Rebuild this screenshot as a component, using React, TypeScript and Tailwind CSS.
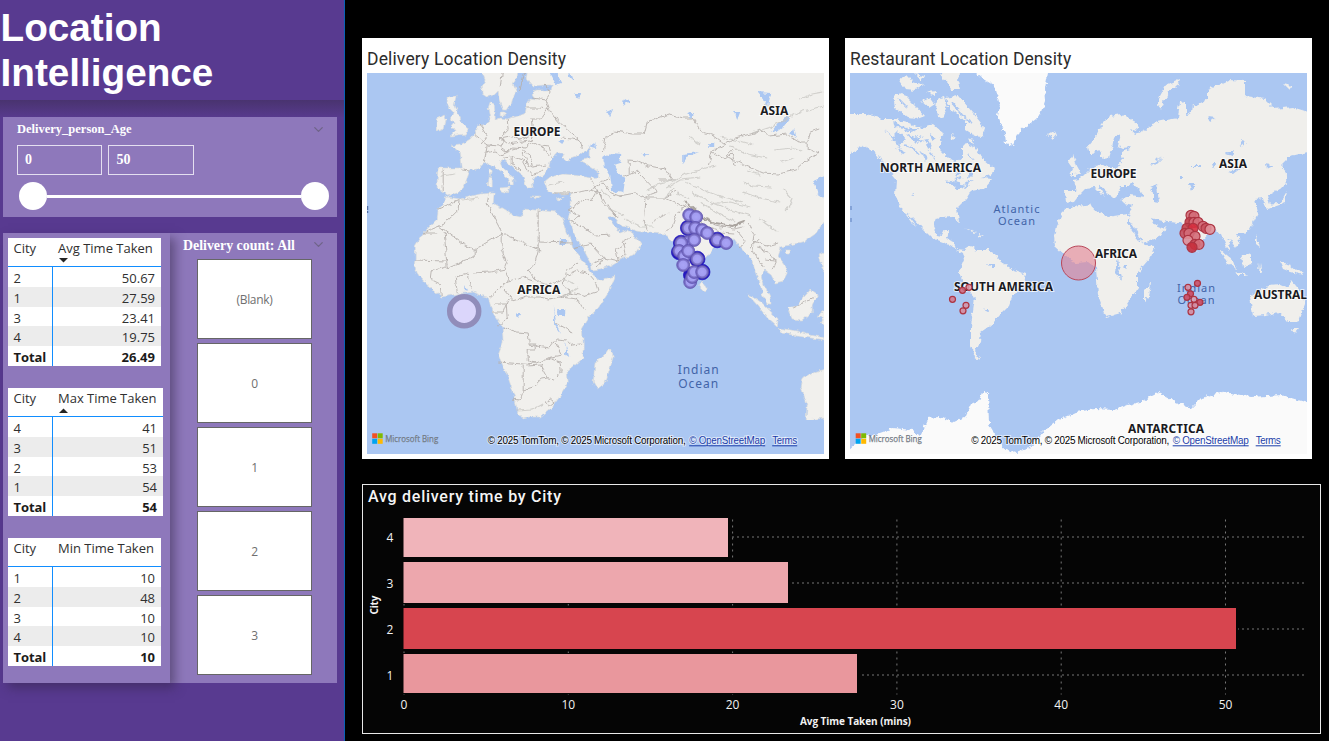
import { ChevronDown } from "lucide-react";

const SEGOE = "font-['Open_Sans','Noto_Sans',sans-serif]";

type Row = [string, string];

const tables: { head: string; sort?: "up" | "down"; width: string; tracking: string; rows: Row[]; total: string }[] = [
  { head: "Avg Time Taken", sort: "down", width: "w-[153px]", tracking: "tracking-[0px]", total: "26.49", rows: [["2", "50.67"], ["1", "27.59"], ["3", "23.41"], ["4", "19.75"]] },
  { head: "Max Time Taken", sort: "up", width: "w-[155px]", tracking: "tracking-[-0.02px]", total: "54", rows: [["4", "41"], ["3", "51"], ["2", "53"], ["1", "54"]] },
  { head: "Min Time Taken", width: "w-[153px]", tracking: "tracking-[0px]", total: "10", rows: [["1", "10"], ["2", "48"], ["3", "10"], ["4", "10"]] },
];

function TimeTable({ t }: { t: (typeof tables)[number] }) {
  return (
    <div className={`${t.width} h-[128px] bg-white text-[13px] text-[#303030] ${SEGOE}`}>
      <div className="flex h-[29px] border-b border-[#118dff]">
        <div className="w-[45px] pl-[5.5px] leading-[21px]">City</div>
        <div className="relative flex-1 pl-[5px] leading-[21px]">
          <span className={`whitespace-nowrap ${t.tracking}`}>{t.head}</span>
          {t.sort && (
            <svg className="absolute left-[6px] top-[20px]" width="9" height="5" viewBox="0 0 9 5">
              <path d={t.sort === "down" ? "M0 0H9L4.5 4.5Z" : "M0 5H9L4.5 .5Z"} fill="#252423" />
            </svg>
          )}
        </div>
      </div>
      {t.rows.map(([a, b], i) => (
        <div key={a} className={`flex h-[19.75px] leading-[22px] ${i % 2 ? "bg-[#ececec]" : "bg-white"}`}>
          <div className="w-[45px] border-r border-[#118dff] pl-[5.5px]">{a}</div>
          <div className="flex-1 pr-[6px] text-right">{b}</div>
        </div>
      ))}
      <div className="flex h-5 font-bold leading-[22px] text-[#1c1b1a]">
        <div className="w-[45px] border-r border-[#118dff] pl-[5.5px] tracking-[-0.1px]">Total</div>
        <div className="flex-1 pr-[6px] text-right">{t.total}</div>
      </div>
    </div>
  );
}

function Sidebar() {
  return (
    <aside className="flex h-full w-[345px] shrink-0 flex-col border-r border-[#0a62b5] bg-[#583a90]">
      <h1 className="h-[100px] bg-[#583a90] pl-[0.5px] pt-[5px] font-['Liberation_Sans',sans-serif] text-[38.7px] font-bold leading-[45px] text-white">
        Location
        <br />
        Intelligence
      </h1>
      <div className="h-[17px] bg-gradient-to-b from-[#49336f] to-[#573a8d]" />
      <section className="ml-[3px] h-[100px] w-[334px] bg-[#8e78bb] pl-[14px] pt-[5px] font-['Liberation_Serif',serif] font-bold text-white">
        <div className="flex h-[23px] items-start justify-between pr-[11px]">
          <span className="text-[12.5px] leading-[15px]">Delivery_person_Age</span>
          <ChevronDown size={15} strokeWidth={2} color="#6f6488" />
        </div>
        <div className="flex gap-[6px] text-[14px]">
          <div className="flex h-[30px] w-[85px] items-center border border-[#e4dff0] pb-[2px] pl-[7px]">0</div>
          <div className="flex h-[30px] w-[86px] items-center border border-[#e4dff0] pb-[2px] pl-[7.5px]">50</div>
        </div>
        <div className="ml-[2px] mt-[7px] flex items-center">
          <div className="size-[28px] rounded-full bg-white" />
          <div className="h-[3px] w-[254px] bg-white" />
          <div className="size-[28px] rounded-full bg-white" />
        </div>
      </section>
      <section className="ml-[3px] mt-4 flex h-[450px] w-[334px] bg-[#8e78bb]">
        <div className="flex h-full w-[167px] flex-col gap-[22px] bg-[#8e78bb] pl-[5px] pt-[5px] shadow-[5px_5px_10px_rgba(50,35,70,0.5)]">
          {tables.map((t) => (
            <TimeTable key={t.head} t={t} />
          ))}
        </div>
        <div className="flex-1 pl-[13px]">
          <div className="flex h-[26px] items-start justify-between pr-[11px] pt-[4px]">
            <span className="font-['Liberation_Serif',serif] text-[13.9px] font-bold leading-[18px] text-white">Delivery count: All</span>
            <ChevronDown size={15} strokeWidth={2} color="#6f6488" />
          </div>
          <div className="ml-[14px] flex flex-col gap-[4px]">
            {["(Blank)", "0", "1", "2", "3"].map((v) => (
              <div key={v} className={`flex h-[80px] w-[115px] items-center justify-center border border-[#666] bg-white pt-px text-[12px] tracking-[-0.3px] text-[#6f6f6f] ${SEGOE}`}>
                {v}
              </div>
            ))}
          </div>
        </div>
      </section>
    </aside>
  );
}

function Label({ x, y, w, children }: { x: number; y: number; w: number; children: string }) {
  return (
    <text
      x={x}
      y={y - 0.5}
      textLength={w}
      fontSize={12}
      fontWeight={700}
      fill="#1b1b1f"
      stroke="#ffffffb0"
      strokeWidth={2}
      paintOrder="stroke"
      fontFamily="'Noto Sans', 'Open Sans', sans-serif"
    >
      {children}
    </text>
  );
}

function OceanLabel({ cx, y, lines, size, step }: { cx: number; y: number; lines: string[]; size: number; step: number }) {
  return (
    <text y={y} fontSize={size} letterSpacing="1" fill="#4264a8" textAnchor="middle" fontFamily="'Noto Sans', 'Open Sans', sans-serif">
      {lines.map((line, i) => (
        <tspan key={line} x={cx} dy={i ? step : 0}>
          {line}
        </tspan>
      ))}
    </text>
  );
}

function Credits({ x, y }: { x: number; y: number }) {
  return (
    <g>
      <rect x={x + 5} y={y - 20} width="5" height="5" fill="#f25022" />
      <rect x={x + 10.5} y={y - 20} width="5" height="5" fill="#7fba00" />
      <rect x={x + 5} y={y - 14.5} width="5" height="5" fill="#00a4ef" />
      <rect x={x + 10.5} y={y - 14.5} width="5" height="5" fill="#ffb900" />
      <text x={x + 18} y={y - 11} fontSize="9.5" textLength="53" lengthAdjust="spacingAndGlyphs" fill="#737b85" stroke="#737b85" strokeWidth=".25" fontFamily="'Open Sans', sans-serif">Microsoft Bing</text>
      <g fontSize="10" fontFamily="'Liberation Sans', sans-serif" stroke="#ffffff90" strokeWidth="2" paintOrder="stroke">
        <text x={x + 120.5} y={y - 9} textLength="198" fill="#000">© 2025 TomTom, © 2025 Microsoft Corporation,</text>
        <text x={x + 322} y={y - 9} textLength="76" fill="#1a3ca8">© OpenStreetMap</text>
        <text x={x + 405} y={y - 9} textLength="25" fill="#1a3ca8">Terms</text>
      </g>
      <path d={`M${x + 322} ${y - 7.5}h76M${x + 405} ${y - 7.5}h25`} stroke="#1a3ca8" strokeWidth="1" />
    </g>
  );
}

const deliveryDots: [number, number, boolean?][] = [
  [688, 228, true], [681, 243, true], [679, 252, true], [697, 259, true], [702, 272, true], [717, 240, true], [691, 275, true],
  [689, 215], [696, 217], [688, 228], [695, 228], [702, 230], [707, 233], [717, 240], [726, 243], [688, 242], [694, 240],
  [681, 243], [679, 251], [684, 256], [688, 251], [683, 265], [690, 282], [692, 277], [694, 272], [702, 272], [697, 259],
];

function DeliveryMap() {
  return (
    <svg className="block" width="457" height="381" viewBox="366.8 73 457 381">
      <defs>
        <filter id="coastA" x="0" y="0" width="100%" height="100%">
          <feTurbulence type="fractalNoise" baseFrequency=".16" numOctaves="3" seed="4" result="n" />
          <feDisplacementMap in="SourceGraphic" in2="n" scale="5" xChannelSelector="R" yChannelSelector="G" />
        </filter>
        <radialGradient id="violet">
          <stop offset="0" stopColor="#a9a4f6" />
          <stop offset=".6" stopColor="#a29cf0" />
          <stop offset=".75" stopColor="#7f75cc" />
          <stop offset="1" stopColor="#6e63b5" />
        </radialGradient>
      </defs>
      <rect x="366" y="72" width="459" height="383" fill="#abc7f2" />
      <g filter="url(#coastA)">
        <g fill="#f1f0ed" stroke="#dcdcd8" strokeWidth=".6">
          <path d="M480 68L485 80 481 86 482 93 488 97 494 95 498 91 499 100 503 110 507 110 511 104 513 97 516 92 513 84 516 77 517 68Z" />
          <path d="M528 68L526 78 532 86 545 85 553 85 551 90 535 90 533 95 536 100 530 99 527 104 525 114 517 116 507 119 500 118 495 120 495 115 494 104 490 102 488 108 490 120 485 124 478 126 475 133 470 139 460 145 452 146 460 153 461 159 462 168 452 168 438 168 437 179 437 189 442 191 447 196 457 193 463 188 467 178 470 170 478 169 483 164 489 163 497 170 507 178 509 184 512 184 512 180 516 180 510 175 503 169 500 162 504 160 512 166 520 173 524 180 527 188 532 188 531 183 535 177 543 176 548 170 550 161 557 153 564 153 562 158 567 162 571 158 577 156 582 152 590 149 590 158 580 161 588 165 598 172 598 177 590 178 580 176 563 174 550 177 545 181 547 191 555 193 563 194 572 193 570 201 570 209 568 219 573 232 582 247 591 264 592 270 600 269 612 265 625 257 634 255 641 244 635 236 627 230 620 233 614 226 608 217 614 216 620 225 628 228 636 231 650 233 665 234 670 241 674 241 678 250 680 264 689 285 693 288 697 280 702 262 713 248 724 240 734 239 739 246 744 252 749 257 753 262 755 272 759 281 762 294 768 304 771 304 769 295 764 286 761 276 764 270 771 275 775 283 783 281 787 273 784 264 778 256 781 247 790 245 805 241 815 234 823 223 829 218 829 68Z" />
          <path d="M447 197L460 199 480 194 494 193 493 203 503 209 512 214 520 216 523 209 534 210 545 211 556 212 562 217 567 232 573 249 582 260 593 275 600 280 615 276 610 290 598 308 588 318 582 328 583 342 583 358 575 365 567 372 568 382 560 395 550 409 540 417 530 417 523 419 517 412 515 398 507 375 498 355 503 342 502 327 497 319 492 312 488 297 480 295 473 292 457 294 442 297 427 285 419 276 414 268 415 258 415 246 423 233 437 219 438 209Z" />
          <path d="M447 97L456 96 454 104 458 113 460 121 468 128 465 134 450 136 456 130 450 129 455 123 450 120 453 112 447 106ZM436 119L444 114 446 120 444 128 436 131ZM489 176L492 177 492 187 488 186ZM490 168L492 171 491 176 489 172ZM500 188L510 187 508 193 501 191ZM530 196H540L537 198ZM557 199L564 196 560 200ZM501 112h4v4h-4Z" />
          <path d="M610 348L613 357 609 370 605 383 597 389 593 382 595 362 604 356ZM702 281L706 288 704 292 700 288ZM747 294L753 297 762 303 770 311 778 319 777 327 768 319 757 305ZM778 328L797 331 810 335 826 338 826 340 803 337 782 333ZM787 308L797 306 803 298 810 290 817 295 812 305 812 312 803 320 792 319ZM817 316L826 310V325L820 324 823 318ZM819 254L827 250V275L822 268ZM803 378L815 372 828 368V418L815 419 806 420 807 405 801 387ZM785 250h5v4h-5Z" />
        </g>
        <g fill="#abc7f2">
          <path d="M603 158L610 153 621 154 620 163 614 165 618 173 625 179 623 193 612 191 610 176 605 168ZM772 131L779 122 787 115 790 118 783 127 776 132ZM813 181L827 175V200L817 193ZM548 70L557 73 562 83 556 85ZM568 73l4 3 2 6-5-5ZM574 93h7l-3 5ZM606 112l7-3-4 9ZM682 154l17-2-13 5-4 6ZM708 143h6v4h-6ZM757 92l14 1-3 13-6-8ZM734 112h6l-3 8ZM625 98l4 3-6 5ZM687 113h7l-3 5ZM640 153h8l-3 4ZM557 309h8v7h-8ZM553 305l3 18 6 12-8-10ZM565 342l4 15-3-2ZM516 314h5l-3 4ZM560 239h7v6h-8ZM558 141h6l-2 3ZM588 147l6-4 1 6ZM464 284l3 7-3-1ZM790 134l3-5 2 8Z" />
        </g>
        <g fill="none" stroke="#b5b0ad" strokeWidth=".9">
          <path d="M438 209L460 199 459 209 444 224 423 233 437 233M439 226L463 244 474 250 502 233 492 214 487 203 489 193M444 232L447 268M474 250L474 258 465 260 447 268M414 260L446 261M446 267L431 271 430 279 440 284 441 296M455 276L457 293M455 277L468 274 472 290M473 273L490 272 505 269 507 264 502 250 502 233 540 250M538 211V242L572 243M538 244V250L534 266 528 270 538 282 549 285 560 281 566 276M505 269L508 280 500 288 490 297M508 281L521 277 533 281M503 289L513 301 526 297 540 297 548 299 560 297 570 293 563 282 567 271 577 262M492 312L503 312 508 299M495 304H506L507 318 498 326M502 327L517 332 528 333 529 344H535V350H528V361L536 363 548 358 561 355 555 343M498 362L523 364 536 363M523 365V393L520 400 512 399M526 366L541 365 548 378 554 379M523 390L533 387 541 379 548 378M548 358L560 362 561 371 557 377M529 345L549 348 556 339 566 340 571 345 581 344M556 323L572 332M560 297L577 299 584 310M569 293L583 296 599 291 596 282M566 276L577 271 587 273 593 280M573 249L590 244 603 258 597 267M545 402l5-3 4 3-5 4Z" />
          <path d="M443 169L443 191M461 170L470 171M473 134L480 140 487 145 486 152 484 163M480 124L487 136 481 144M487 145L500 146 503 139M507 119L508 130 500 138 508 144 522 142 530 141 533 135 531 119M500 138L510 136 520 140 530 135M484 153L495 151 499 156 512 150 523 147M499 146L507 152 512 147 526 148 532 142M504 158L513 157 522 160 527 169 532 175M512 157V164L520 170M522 153L527 164 532 167 546 165M532 166L530 155 523 150M532 175L543 171M532 142L542 147 549 156M541 146L549 147 552 158M530 119L541 119 548 109 560 123 567 129 580 140 582 149M527 108H539L548 109M533 98L546 100 550 111M480 68L502 73 500 87M525 71L520 90M545 84L550 92 545 99M580 140L561 138M553 193L572 193 590 190 600 193 603 203 618 217M590 178L597 190 592 199 582 201 568 210M590 190L603 183 611 193 622 197M568 210L579 215 573 221M597 190L607 204 614 214M600 182L609 179M567 220L579 225 596 236 610 235M592 264L605 258 618 261 625 254 622 242 631 237M618 261L616 250 626 243M603 152L606 136 615 131 633 134 644 134 647 122 669 114 683 118 692 118 702 132 714 136 725 144 712 151 708 165M629 176V160L638 161 649 166 665 169 673 180 659 180M624 177L637 171 657 192 646 196 644 222 647 230M619 196L635 193 645 198 664 198 676 191M668 213L659 218 651 222M666 199L675 203 685 207 676 214 672 226 665 232M726 144L735 138 754 133 760 130 770 136 786 134 801 143 808 143 808 149 818 153 806 161 796 170 778 174 763 173 741 164 726 156 732 150M807 143L810 132 819 129M712 152L725 159 732 153 735 166M685 205L699 216 715 225 733 229 743 227M701 220L703 226 720 232 734 233M720 228L726 227M737 231L745 241 739 249M748 224L754 234 753 241 767 246 778 243M758 239L750 247 757 257 764 268M757 248L768 251 776 262 773 269M764 260L776 261M793 308L805 302 814 297" />
        </g>
        <g fill="none" stroke="#c6c4c0" strokeWidth="1.2" opacity=".75">
          <path d="M672 182L686 174 699 170 716 165M666 188L680 180 700 178M685 182L703 190 719 196 742 202M692 193L711 202 730 210 752 216M700 202L718 213 735 222M709 204L730 202 750 207M742 192L760 198 779 202M720 137L739 141 753 145M730 147L747 154 766 158M752 133L770 127 787 118 803 111 823 106M765 104L775 111 783 106M774 150L792 148 801 151M676 193L690 199M646 190L660 183 676 179M664 198L674 188M624 219L640 226 655 226M607 208L623 215M781 162L794 158M743 182L752 186 772 187M747 171L760 175M689 137L700 144M783 189L792 199 786 211M758 218L766 224 776 231M799 99L812 94 823 92M440 176L455 174M442 207L452 204M462 200L478 198M562 278L574 284M565 296L577 288M516 411L532 410 543 404M600 190L611 198M548 185L563 182" />
        </g>
        <path d="M700 217L715 223 733 226 744 222M685 201L694 209 704 218" fill="none" stroke="#aaa49f" strokeWidth="2" />
      </g>
      <Label x={513.3} y={136} w={47}>EUROPE</Label>
      <Label x={760} y={115} w={28}>ASIA</Label>
      <Label x={517} y={294} w={43}>AFRICA</Label>
      <OceanLabel cx={698.5} y={374} lines={["Indian", "Ocean"]} size={12} step={13.5} />
      <path d="M367.5 206v4M367.5 211v2" stroke="#3e5994" />
      <circle cx="464" cy="311.3" r="14.5" fill="#dbd6fb" stroke="#918dba" strokeWidth="5.5" />
      {deliveryDots.map(([x, y, dark], i) => (
        <circle key={i} cx={x} cy={y} r={dark ? 7.8 : 6.5} fill={dark ? "#2418bd" : "url(#violet)"} stroke={dark ? "#2418bd" : "#5a4fb0"} strokeWidth=".7" />
      ))}
      <Credits x={367} y={453.3} />
    </svg>
  );
}

const restaurantDots: [number, number, number, string][] = [
  [1191, 215, 5, "#d36d79"], [1194, 216, 5, "#d36d79"], [1190, 222, 5, "#c13e4b"], [1194, 222, 5, "#d36d79"], [1198, 222, 5, "#d36d79"],
  [1203, 226, 5, "#d36d79"], [1206, 228, 5, "#c8505c"], [1210, 229, 5, "#e08f98"], [1187, 228, 5, "#c13e4b"], [1185, 233, 5, "#c8505c"],
  [1193, 228, 5, "#d62f3f"], [1189, 233, 5, "#d36d79"], [1195, 236, 5, "#d36d79"], [1188, 240, 5, "#e08f98"], [1195, 244, 5, "#c8505c"],
  [1199, 244, 5, "#d36d79"], [1192, 247, 5, "#c8303d"],
  [952.5, 299, 3, "#cf7c93"], [962.5, 290, 3, "#cf6c83"], [969, 287, 3, "#e09aa8"], [966, 305, 3, "#d296ac"], [963, 310.5, 3, "#d58ca0"],
  [1197.5, 283, 3, "#cb5269"], [1188, 287, 3, "#d790a5"], [1190.5, 293.5, 3, "#cb4a62"], [1187, 297, 3, "#cb4a62"], [1194, 299, 3, "#d9a3b5"],
  [1200, 302, 3, "#cb4a62"], [1191, 305, 3, "#d296ac"], [1195, 305, 3, "#d58ca0"], [1191, 311.5, 3, "#d58ca0"],
];

function RestaurantMap() {
  return (
    <svg className="block" width="457" height="381" viewBox="850 73 457 381">
      <defs>
        <filter id="coastB" x="0" y="0" width="100%" height="100%">
          <feTurbulence type="fractalNoise" baseFrequency=".2" numOctaves="3" seed="9" result="n" />
          <feDisplacementMap in="SourceGraphic" in2="n" scale="6" xChannelSelector="R" yChannelSelector="G" />
        </filter>
      </defs>
      <rect x="849" y="72" width="460" height="383" fill="#abc7f2" />
      <g filter="url(#coastB)" fill="#f0efec">
        <path d="M846 114L866 114 883 119 895 119 910 123 921 128 933 124 943 133 940 141 940 149 950 159 956 163 963 157 963 146 966 143 974 147 983 159 995 169 991 175 980 178 992 179 983 189 971 191 966 199 957 208 959 222 955 219 951 216 936 218 933 226 937 235 942 236 945 230 949 230 947 238 954 243 957 249 965 250 970 247 978 250 988 250 995 254 1001 262 1012 269 1026 274 1024 283 1013 295 1009 306 1000 315 993 323 988 327 981 332 980 342 975 351 980 360 974 356 971 345 971 325 975 298 963 283 959 272 964 260 962 252 950 246 943 242 932 238 923 229 913 218 906 213 916 226 911 222 902 209 895 196 896 179 885 166 876 153 863 146 846 156Z" />
        <path d="M893 96L901 93 907 97 916 106 925 116 917 119 908 118 895 108ZM946 98L956 96 963 101 973 113 985 128 982 137 974 136 966 131 966 122 956 113 949 108ZM899 80L907 76 912 81 924 85 916 90 905 89ZM940 74L951 70 963 69 957 79 960 89 951 89ZM921 101L930 97 935 104 929 108ZM937 99l7-2 3 10-4 12-7-6ZM926 92l11-1-2 5ZM950 133l6 4-5 3ZM915 74l9 2-3 5ZM967 140l4-3 4 5Z" />
        <path d="M970 68L983 79 995 86 1000 106 998 116 1005 133 1006 144 1013 146 1020 131 1036 119 1042 111 1046 99 1045 88 1049 68Z" fill="#fafafa" />
        <path d="M1048 134L1053 131 1058 133 1053 139ZM1068 162l5-8 4 12 4 7-6 2-5 0 3-6ZM965 228l11 4-2 1ZM978 234l6 1-4 2Z" />
        <path d="M1065 191L1076 191 1077 186 1072 180 1080 179 1088 171 1094 166 1102 165 1108 167 1117 167 1123 160 1121 152 1130 149 1132 147 1122 148 1118 146 1121 134 1114 137 1112 148 1109 158 1103 159 1100 151 1093 153 1089 153 1088 146 1096 136 1101 125 1110 116 1121 114 1130 118 1138 124 1136 131 1130 129 1135 135 1145 130 1153 123 1161 121 1178 118 1180 102 1186 101 1186 115 1192 113 1193 106 1208 99 1208 90 1217 86 1230 80 1245 81 1245 96 1265 99 1275 109 1292 107 1312 113V151L1291 156 1281 166 1287 173 1285 186 1268 196 1270 206 1264 203 1263 198 1255 199 1258 213 1250 229 1245 233 1236 233 1240 240 1235 248 1229 239 1230 254 1225 242 1222 235 1213 229 1203 240 1198 252 1191 244 1186 231 1180 223 1168 222 1151 218 1155 225 1166 229 1161 236 1150 241 1143 243 1135 229 1128 218 1133 205 1124 203 1120 199 1131 195 1144 197 1140 190 1131 186 1121 186 1118 193 1112 199 1106 190 1098 184 1104 197 1095 188 1085 189 1080 194 1074 202 1066 203Z" />
        <path d="M1065 209L1078 206 1091 204 1094 210 1108 217 1128 214 1128 223 1138 239 1146 246 1154 247 1150 258 1138 272 1138 288 1131 298 1121 313 1106 317 1098 295 1096 268 1088 262 1076 263 1065 255 1055 246 1054 236 1056 226ZM1151 283L1149 297 1144 301 1144 290ZM1220 250L1233 261 1236 270 1227 262ZM1241 257L1251 253 1251 264 1243 267ZM1235 272l14 3-10 0ZM1280 262l11 3 12 10-12-3-8-3ZM1250 297L1261 290 1270 285 1279 284 1288 288 1292 281 1301 292 1305 304 1298 322 1288 322 1279 312 1266 315 1253 316ZM1292 328h7l-4 5ZM1157 105L1160 96 1166 85 1180 79 1179 84 1168 92 1161 110ZM1283 84l9 2-3 4ZM1268 209l-5-5 17-1 7-12-2 12ZM1285 170l2 17-2-3ZM1256 234l4 13-4-3ZM1260 263l2 10-3 0Z" />
        <path d="M846 452L863 437 876 434 893 428 912 430 920 436 928 418 940 417 953 422 966 416 971 405 979 401 983 391 988 392 989 425 1003 448 1016 453 1030 448 1043 432 1058 420 1076 412 1095 409 1115 410 1128 405 1140 402 1158 393 1175 402 1191 408 1201 398 1225 392 1251 397 1281 395 1312 404V460H846Z" fill="#fafafa" />
        <path d="M1123 190L1131 184 1140 190 1130 195ZM1150 187L1157 184 1159 203 1153 202 1153 194ZM1208 117l8 1-6 4ZM1240 140l5 3-4 3ZM1188 183h8l-5 7ZM1151 164l12-8-9 9ZM1212 163l4 0-2 5ZM1166 186l-4 7ZM1229 172l14-5-10 8ZM1226 154l8-3-2 5ZM1190 165h12v1h-12ZM1265 164l7 1-6 3ZM1180 175h3v3h-3Z" fill="#abc7f2" />
        <path d="M885 130L893 136 898 131 906 140 900 145ZM906 133L917 138 923 134 915 143ZM920 149l8 8-2 4ZM930 134l6 4-4 3ZM946 180l20 5-10 4ZM911 195l2-1 0 2ZM1123 265h4v4ZM1118 258l-3 13 6 9ZM987 264h8v3h-5ZM984 309h4v2ZM896 147l9 5-4 3ZM969 170l4 4-5 5ZM893 121l8 6-6 2ZM908 126l9 5-8 1ZM926 144l6 2-5 4ZM955 170l6 2-4 5Z" fill="#abc7f2" />
        <path d="M898 125l12 6 8-2M904 145l9 3 6 7M918 142l9-2 5 9M929 152l7 8M894 139l7 9M950 183l12-6M963 188l10-8M974 160l-7-6M899 99l9 9M953 103l9 12 10 7" fill="none" stroke="#abc7f2" strokeWidth="1.6" />
      </g>
      <circle cx="1078.5" cy="263" r="17" fill="#e28093" fillOpacity=".6" stroke="#b9485a" />
      <Label x={880} y={172} w={101}>NORTH AMERICA</Label>
      <Label x={1090.5} y={178} w={46}>EUROPE</Label>
      <Label x={1219} y={168} w={28}>ASIA</Label>
      <Label x={1095} y={258} w={42}>AFRICA</Label>
      <Label x={954} y={291} w={99}>SOUTH AMERICA</Label>
      <Label x={1254} y={299} w={53}>AUSTRAL</Label>
      <Label x={1128} y={433} w={76}>ANTARCTICA</Label>
      <OceanLabel cx={1017} y={213} lines={["Atlantic", "Ocean"]} size={11} step={12.3} />
      <OceanLabel cx={1196.5} y={292} lines={["Indian", "Ocean"]} size={11} step={12.3} />
      <path d="M851 206v4M851 218v4" stroke="#5d7fbd" />
      {restaurantDots.map(([x, y, r, fill], i) => (
        <circle key={i} cx={x} cy={y + 0.3} r={r} fill={fill} fillOpacity=".9" stroke="#ad3442" strokeWidth="1.2" />
      ))}
      <Credits x={850.7} y={453.3} />
    </svg>
  );
}

const bars = [
  { city: "4", y: 518, h: 39, w: 325, fill: "#f0b4ba", mid: 537.5 },
  { city: "3", y: 562, h: 41, w: 385, fill: "#eda7ad", mid: 583.5 },
  { city: "2", y: 608, h: 41, w: 833, fill: "#d7454f", mid: 629.5 },
  { city: "1", y: 654, h: 39, w: 454, fill: "#e9979d", mid: 675.5 },
];

function CityChart() {
  return (
    <section className="h-[250px] w-[959px] border border-[#e8e8e8] bg-[#050505]">
      <svg className="block" width="957" height="248" viewBox="363 485.5 957 248" fontFamily="'Open Sans', sans-serif">
        <text x="368" y="502" fontSize="16" fontWeight="500" textLength="193" fill="#f5f5f5" fontFamily="Roboto, sans-serif">Avg delivery time by City</text>
        {[0, 10, 20, 30, 40, 50].map((v) => (
          <g key={v}>
            <line x1={404 + v * 16.43} x2={404 + v * 16.43} y1="520" y2="695" stroke="#777" strokeDasharray="2 4" />
            <text x={404 + v * 16.43} y="709" fontSize="12" textAnchor="middle" fill="#f2f2f2">{v}</text>
          </g>
        ))}
        {bars.map((b) => (
          <g key={b.city}>
            <line x1="402" x2="1307" y1={b.mid} y2={b.mid} stroke="#777" strokeDasharray="2 3" />
            <rect x="402" y={b.y - 0.5} width={b.w + 3} height={b.h + 2} fill="#050505" />
            <rect x="403.5" y={b.y + 0.5} width={b.w - 0.5} height={b.h} fill={b.fill} />
            <text x="390" y={b.mid + 4.5} fontSize="12" textAnchor="middle" fill="#f2f2f2">{b.city}</text>
          </g>
        ))}
        <text x="800" y="725.5" fontSize="10" fontWeight="700" textLength="111" fill="#f2f2f2">Avg Time Taken (mins)</text>
        <text transform="translate(377.5 615) rotate(-90)" fontSize="10" fontWeight="700" textLength="19" fill="#f2f2f2">City</text>
      </svg>
    </section>
  );
}

export default function App() {
  return (
    <div className="flex h-[741px] w-[1329px] overflow-hidden bg-black">
      <Sidebar />
      <main className="flex flex-1 flex-col pl-[17px] pt-[38px]">
        <div className="flex gap-[16px] font-['Roboto',sans-serif] text-[17.5px] leading-[22px] text-[#2c2c2c]">
          <section className="h-[421px] w-[467px] bg-white px-[5px] pt-[10px]">
            <h2 className="h-[25px] whitespace-nowrap tracking-[0.15px]">Delivery Location Density</h2>
            <DeliveryMap />
          </section>
          <section className="h-[421px] w-[467px] bg-white px-[5px] pt-[10px]">
            <h2 className="h-[25px] whitespace-nowrap tracking-[0.1px]">Restaurant Location Density</h2>
            <RestaurantMap />
          </section>
        </div>
        <div className="mt-[25px]">
          <CityChart />
        </div>
      </main>
    </div>
  );
}
